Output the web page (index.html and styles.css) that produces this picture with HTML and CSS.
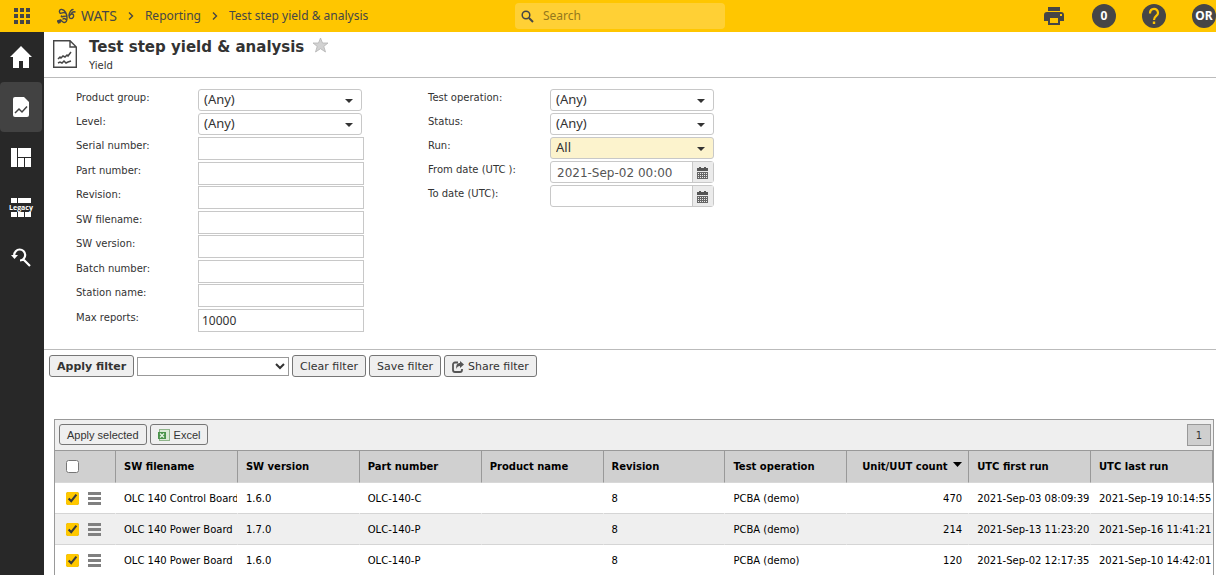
FILE: index.html
```html
<!DOCTYPE html>
<html lang="en">
<head>
<meta charset="utf-8">
<title>Test step yield &amp; analysis</title>
<link rel="stylesheet" href="styles.css">
</head>
<body>
<header class="topbar">
  <nav class="crumbs" aria-label="Breadcrumb">
    <button class="apps" aria-label="Apps"><svg width="16" height="16" viewBox="0 0 16 16"><path d="M0 0h4v4H0zM6 0h4v4H6zM12 0h4v4h-4zM0 6h4v4H0zM6 6h4v4H6zM12 6h4v4h-4zM0 12h4v4H0zM6 12h4v4H6zM12 12h4v4h-4z"/></svg></button>
    <a class="brand" href="#"><svg width="19" height="17" viewBox="0 0 19 17" fill="none" stroke="#464646" stroke-width="1.4" stroke-linecap="round"><path d="M3 5C1.500 3 3 1 5 1.500C8 2 10 6 10 10C10 13 9 14.500 7.500 14.500C5.500 14.500 5 12 3 12.500M3 5C4 6.500 7 3 8 5M4.500 8C3.500 10 8 7 9.500 8.500M6 11C7 10 9 11 9.500 12"/><path d="M.5 13l3-1-.5 2.500L1.500 15z" fill="#464646"/><path d="M12 8C12 5 14 1.500 16 1.500M14.500 5.500C15 4 17 3.500 18 4M13 7C11.500 9 12.500 10.500 14 10.500C16 10.500 17 8.500 16.500 7C16 5.500 14 6 13 7z"/></svg><span>WATS</span></a>
    <svg class="chev" width="6" height="8" viewBox="0 0 6 8"><path d="M1 0.500L4.500 4L1 7.500"/></svg>
    <a href="#">Reporting</a>
    <svg class="chev" width="6" height="8" viewBox="0 0 6 8"><path d="M1 0.500L4.500 4L1 7.500"/></svg>
    <a href="#">Test step yield &amp; analysis</a>
  </nav>
  <label class="search">
    <svg width="13" height="13" viewBox="0 0 13 13" fill="none" stroke="#464646"><circle cx="5" cy="5" r="3.800" stroke-width="1.500"/><path d="M8 8l4 4" stroke-width="2"/></svg>
    <input type="search" placeholder="Search" aria-label="Search">
  </label>
  <div class="tools">
    <button class="print" aria-label="Print"><svg width="20" height="18" viewBox="0 0 20 18"><path fill="#464646" fill-rule="evenodd" d="M4 0h12v4H4zM3 5h14a3 3 0 0 1 3 3v6h-4v4H4v-4H0V8a3 3 0 0 1 3-3zM6 11v5h8v-5zM16 7v2h2V7z"/></svg></button>
    <button class="disc">0</button>
    <button class="disc" aria-label="Help"><svg width="24" height="24" viewBox="0 0 24 24" fill="none"><path d="M8 9.500C8 3.500 16 3.500 16 9C16 12 12 12 12 16" stroke="#ffc600" stroke-width="2.200"/><path d="M10.800 17.500h2.400v2.500h-2.400z" fill="#ffc600"/></svg></button>
    <button class="disc">OR</button>
  </div>
</header>
<div class="shell">
  <nav class="side" aria-label="Main">
    <a href="#" aria-label="Home"><svg width="22" height="22" viewBox="0 0 22 22"><path fill="#fff" d="M11 0L22 11h-3v11h-6v-7H9v7H3V11H0z"/></svg></a>
    <a href="#" class="on" aria-label="Reporting"><svg width="16" height="20" viewBox="0 0 16 20"><path fill="#fff" d="M2 0h9l5 5v13a2 2 0 0 1-2 2H2a2 2 0 0 1-2-2V2a2 2 0 0 1 2-2z"/><path d="M2 16l4-4 3 3 5-5.500" fill="none" stroke="#424242" stroke-width="1.500"/></svg></a>
    <a href="#" aria-label="Dashboard"><svg width="20" height="19" viewBox="0 0 20 19"><path fill="#fff" d="M0 0h6v19H0zM7 0h13v9H7zM7 10h6v9H7zM14 10h6v9h-6z"/></svg></a>
    <a href="#" class="legacy"><svg width="20" height="19" viewBox="0 0 20 19"><path fill="#fff" d="M0 0h6v5H0zM7 0h13v5H7zM0 14h6v5H0zM7 14h6v5H7zM14 14h6v5h-6z"/></svg><span>Legacy</span></a>
    <a href="#" aria-label="Trace search"><svg width="20" height="20" viewBox="0 0 20 20" fill="none" stroke="#fff"><path d="M3.200 8A5.500 5.500 0 1 1 9 13.500M12 12l7 7" stroke-width="2.200"/><path d="M0 8h7L3.500 12z" fill="#fff" stroke="none"/></svg></a>
  </nav>
  <main>
    <div class="title">
      <svg width="24" height="28" viewBox="0 0 24 28" fill="none" stroke="#464646"><path d="M.7.700H17L23.300 7v20.300H.7zM17 .7V7h6" stroke-width="1.400"/><path d="M5 19l2-2 1 1 2-2 2 1 2-2 1 1 3-4M5 23l2-1 2 1 2-2 2 2 2-1 3-1" stroke-width="1.500"/></svg>
      <div>
        <h1>Test step yield &amp; analysis <svg width="17" height="16" viewBox="0 0 17 16"><path d="M8.500 1l2 5H16l-4.200 3.400L13.500 15l-5-3.300-5 3.300 1.700-5.600L1 6h5.500z" fill="#d2d2d2" stroke="#b4b4b4" stroke-width=".8"/></svg></h1>
        <p>Yield</p>
      </div>
    </div>
    <form class="filters">
      <div class="col left">
        <div class="row"><label for="pg">Product group:</label><select id="pg"><option>(Any)</option></select></div>
        <div class="row"><label for="lv">Level:</label><select id="lv"><option>(Any)</option></select></div>
        <div class="row"><label for="sn">Serial number:</label><input type="text" id="sn"></div>
        <div class="row"><label for="pn">Part number:</label><input type="text" id="pn"></div>
        <div class="row"><label for="rv">Revision:</label><input type="text" id="rv"></div>
        <div class="row"><label for="sf">SW filename:</label><input type="text" id="sf"></div>
        <div class="row"><label for="sv">SW version:</label><input type="text" id="sv"></div>
        <div class="row"><label for="bn">Batch number:</label><input type="text" id="bn"></div>
        <div class="row"><label for="st">Station name:</label><input type="text" id="st"></div>
        <div class="row"><label for="mr">Max reports:</label><input type="text" id="mr" value="10000"></div>
      </div>
      <div class="col">
        <div class="row"><label for="to">Test operation:</label><select id="to"><option>(Any)</option></select></div>
        <div class="row"><label for="ss">Status:</label><select id="ss"><option>(Any)</option></select></div>
        <div class="row"><label for="rn">Run:</label><select id="rn" class="changed"><option>All</option></select></div>
        <div class="row"><label for="fd">From date (UTC ):</label><div class="date"><input type="text" id="fd" value="2021-Sep-02 00:00"><button type="button" aria-label="Pick from date"><svg width="11" height="12" viewBox="0 0 11 12"><path fill="#555" d="M0 1h2V0h2v1h3V0h2v1h2v3H0z"/><path fill="#666" fill-rule="evenodd" d="M0 5h11v7H0zM1 6v1h1V6zM3 6v1h1V6zM5 6v1h1V6zM7 6v1h1V6zM9 6v1h1V6zM1 8v1h1V8zM3 8v1h1V8zM5 8v1h1V8zM7 8v1h1V8zM9 8v1h1V8zM1 10v1h1v-1zM3 10v1h1v-1zM5 10v1h1v-1zM7 10v1h1v-1zM9 10v1h1v-1z"/></svg></button></div></div>
        <div class="row"><label for="td">To date (UTC):</label><div class="date"><input type="text" id="td"><button type="button" aria-label="Pick to date"><svg width="11" height="12" viewBox="0 0 11 12"><path fill="#555" d="M0 1h2V0h2v1h3V0h2v1h2v3H0z"/><path fill="#666" fill-rule="evenodd" d="M0 5h11v7H0zM1 6v1h1V6zM3 6v1h1V6zM5 6v1h1V6zM7 6v1h1V6zM9 6v1h1V6zM1 8v1h1V8zM3 8v1h1V8zM5 8v1h1V8zM7 8v1h1V8zM9 8v1h1V8zM1 10v1h1v-1zM3 10v1h1v-1zM5 10v1h1v-1zM7 10v1h1v-1zM9 10v1h1v-1z"/></svg></button></div></div>
      </div>
    </form>
    <div class="actions">
      <button class="btn strong">Apply filter</button>
      <select class="saved" aria-label="Saved filter"><option></option></select>
      <button class="btn">Clear filter</button>
      <button class="btn">Save filter</button>
      <button class="btn"><svg width="12" height="12" viewBox="0 0 12 12" fill="none"><path d="M6 1.500H3A2 2 0 0 0 1 3.500V9a2 2 0 0 0 2 2h5a2 2 0 0 0 2-2V8" stroke="#555" stroke-width="1.800"/><path d="M8 0l4 3.500L8 7V5C6 5 5 6 4.500 8C3.500 4 5.500 2 8 2z" fill="#555"/></svg>Share filter</button>
    </div>
    <section class="grid">
      <div class="gridbar">
        <button class="btn plain">Apply selected</button>
        <button class="btn plain"><svg width="12" height="12" viewBox="0 0 12 12"><path fill="#8fb48a" d="M1 0h11v12H1z"/><path fill="#dcead8" d="M2 1h9v10H2z"/><path fill="#4b934b" d="M0 3h8v7H0z"/><path d="M2 4.500l4 4M6 4.500l-4 4" stroke="#e8f4e6" stroke-width="1.300"/></svg>Excel</button>
        <button class="page">1</button>
      </div>
      <table>
        <thead><tr><th class="pick"><input type="checkbox" aria-label="Select all"></th><th>SW filename</th><th>SW version</th><th>Part number</th><th>Product name</th><th>Revision</th><th>Test operation</th><th class="num">Unit/UUT count <svg width="9" height="5" viewBox="0 0 9 5"><path d="M0 0h9L4.500 5z"/></svg></th><th>UTC first run</th><th>UTC last run</th></tr></thead>
        <tbody>
          <tr><td class="pick"><input type="checkbox" checked aria-label="Select row"><button class="menu" aria-label="Row menu"></button></td><td>OLC 140 Control Board</td><td>1.6.0</td><td>OLC-140-C</td><td></td><td>8</td><td>PCBA (demo)</td><td class="num">470</td><td>2021-Sep-03 08:09:39</td><td>2021-Sep-19 10:14:55</td></tr>
          <tr><td class="pick"><input type="checkbox" checked aria-label="Select row"><button class="menu" aria-label="Row menu"></button></td><td>OLC 140 Power Board</td><td>1.7.0</td><td>OLC-140-P</td><td></td><td>8</td><td>PCBA (demo)</td><td class="num">214</td><td>2021-Sep-13 11:23:20</td><td>2021-Sep-16 11:41:21</td></tr>
          <tr><td class="pick"><input type="checkbox" checked aria-label="Select row"><button class="menu" aria-label="Row menu"></button></td><td>OLC 140 Power Board</td><td>1.6.0</td><td>OLC-140-P</td><td></td><td>8</td><td>PCBA (demo)</td><td class="num">120</td><td>2021-Sep-02 12:17:35</td><td>2021-Sep-10 14:42:01</td></tr>
        </tbody>
      </table>
    </section>
  </main>
</div>
</body>
</html>
```

FILE: styles.css
```css
* { box-sizing: border-box; }
body {
  margin: 0;
  height: 100vh;
  display: flex;
  flex-direction: column;
  overflow: hidden;
  background: #fff;
  color: #333;
  font: 10px/14px "DejaVu Sans", Verdana, sans-serif;
}
button, input, select { font: inherit; color: inherit; margin: 0; }
button { padding: 0; border: 0; background: none; }
a { color: inherit; text-decoration: none; }
svg { flex: none; }

.topbar {
  flex: none;
  height: 32px;
  display: grid;
  grid-template-columns: 515fr 210px 491fr;
  align-items: center;
  background: #ffc600;
  color: #464646;
  font: 12px/16px "Noto Sans", sans-serif;
}
.crumbs { display: flex; align-items: center; gap: 10px; padding-left: 14px; white-space: nowrap; }
.apps { display: flex; margin-right: 17px; fill: #464646; }
.brand { display: flex; align-items: center; gap: 5px; font-size: 14px; }
.chev { fill: none; stroke: #464646; stroke-width: 1.4; margin: 0 1px; }
.search { display: flex; align-items: center; gap: 9px; height: 26px; padding: 0 6px; border-radius: 4px; background: #ffd035; }
.search input { flex: 1; min-width: 0; padding: 0; border: 0; outline: 0; background: none; }
.search input::placeholder { color: #94781c; opacity: 1; }
.tools { display: flex; justify-content: flex-end; align-items: center; gap: 26px; }
.tools button { display: flex; justify-content: center; align-items: center; }
.print { width: 24px; }
.tools .disc { width: 24px; height: 24px; border-radius: 50%; background: #464646; color: #fff; font-weight: 700; }

.shell { flex: 1; min-height: 0; display: flex; }
.side { flex: none; width: 44px; padding-right: 2px; background: #282828; }
.side a { display: grid; place-items: center; height: 50px; border-radius: 4px; }
.side .on { background: #424242; }
.legacy svg, .legacy span { grid-area: 1 / 1; }
.legacy span { color: #fff; font: 700 7px/9px "Open Sans", sans-serif; }

main { flex: 1; min-width: 0; }
.title { display: flex; gap: 12px; height: 46px; padding: 8px 9px 0; border-bottom: 1px solid #bbb; }
.title > div { margin-top: -2px; }
h1 { display: flex; align-items: center; gap: 8px; margin: 0; font-size: 15px; line-height: 18px; }
h1 svg { margin-top: -4px; }
.title p { margin: 3px 0 0; }

.filters { display: flex; gap: 64px; padding: 11px 32px 16px; border-bottom: 1px solid #bbb; }
.row { display: grid; grid-template-columns: 122px 166px; height: 24px; align-items: start; }
.left .row:nth-child(n+3):nth-child(odd) { height: 25px; }
.row label { padding-top: 2px; }
.row input { height: 23px; padding: 0 3px; border: 1px solid #c8c8c8; font: 12px/16px "Noto Sans", sans-serif; }
.row select {
  width: 164px;
  height: 22px;
  padding: 0 5px 2px;
  border: 1px solid #c8c8c8;
  border-radius: 3px;
  appearance: none;
  font: 13px/18px "Noto Sans", sans-serif;
  background: #fff url("data:image/svg+xml,%3Csvg xmlns='http://www.w3.org/2000/svg' width='8' height='4'%3E%3Cpath d='M0 0h8L4 4z' fill='%23333'/%3E%3C/svg%3E") no-repeat right 8px top 9px;
}
.row .changed { background-color: #fcf3cd; }
.date { display: flex; width: 164px; height: 22px; border: 1px solid #c8c8c8; border-radius: 3px; }
.row .date input { flex: 1; min-width: 0; height: 20px; padding: 1px 6px 0; border: 0; background: none; color: #555; font: 12px/18px "DejaVu Sans", Verdana, sans-serif; }
.date button { display: grid; place-items: center; width: 21px; padding: 1px 1px 0 0; border-left: 1px solid #c8c8c8; background: #ebebeb; }

.actions { display: flex; align-items: center; gap: 4px; padding: 5px; }
.btn { display: flex; align-items: center; gap: 4px; height: 22px; padding: 1px 7px 0; border: 1px solid #767676; border-radius: 3px; background: #efefef; font-size: 11px; white-space: nowrap; }
.actions { gap: 3px; }
.strong { font-weight: 700; }
.saved { width: 152px; height: 19px; border: 1px solid #999; background: #fff; }

.grid { margin: 37px 2px 0 10px; border: 1px solid #999; }
.gridbar { display: flex; align-items: flex-start; gap: 3px; height: 31px; padding: 4px 2px 0 4px; background: #efefef; border-bottom: 1px solid #999; }
.plain { height: 21px; padding-top: 0; font-family: "Liberation Sans", Arial, sans-serif; }
.page { width: 24px; height: 22px; padding-top: 2px; margin-left: auto; border: 1px solid #999; background: #cfcfcf; }
table { width: 100%; table-layout: fixed; border-collapse: separate; border-spacing: 0; color: #000; }
th, td { height: 31px; padding: 0 0 0 8px; text-align: left; white-space: nowrap; overflow: hidden; }
th { height: 32px; background: #d0d0d0; border-right: 1px solid #999; border-bottom: 1px solid #d8d8d8; }
td { padding-top: 2px; border-bottom: 1px solid #d5d5d5; border-right: 1px solid transparent; }
tbody tr:nth-child(even) { background: #efefef; }
.num { padding-right: 6px; text-align: right; }
th svg { margin: 0 0 3px 2px; }
.pick { width: 61px; padding-top: 0; padding-left: 11px; }
.pick input { width: 13px; height: 13px; vertical-align: middle; accent-color: #ffc800; }
.menu { width: 13px; height: 13px; margin-left: 9px; vertical-align: middle; background: repeating-linear-gradient(#808080 0 3px, transparent 3px 5px); }
```
